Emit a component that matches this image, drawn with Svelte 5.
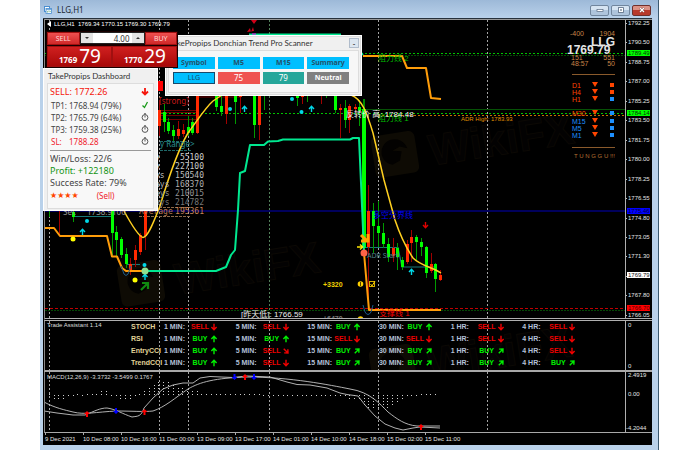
<script>
  const prices = ['1792.25', '1790.50', '1788.75', '1787.00', '1785.25', '1783.50', '1781.75', '1780.00',
    '1778.25', '1776.55', '1774.80', '1773.05', '1771.30', '1769.55', '1767.80', '1766.05'];
  const tags = [
    { v: '1789.49', y: 53, bg: '#00ff00', fg: '#063006' },
    { v: '1784.14', y: 113, bg: '#00ff00', fg: '#063006' },
    { v: '1775.46', y: 211, bg: '#0000ff', fg: '#000040' },
    { v: '1769.79', y: 275, bg: '#ffffff', fg: '#111111' },
    { v: '1766.70', y: 308, bg: '#ff0000', fg: '#500000' }
  ];
  const times = ['9 Dec 2021', '10 Dec 08:00', '10 Dec 16:00', '11 Dec 00:00', '13 Dec 09:00', '13 Dec 17:00',
    '14 Dec 01:00', '14 Dec 10:00', '14 Dec 18:00', '15 Dec 02:00', '15 Dec 11:00'];
  const days = [49.5, 159.5, 188.5, 269.5, 378.5, 487.5];

  // x, high, open/close top, open/close bottom, low, g = bull / r = bear
  const candles = [
    [49.5, 205, 205, 207, 217, 'g'], [59.5, 205, 205, 206, 235, 'r'], [73, 205, 212, 217, 222, 'g'],
    [112, 205, 208, 233, 255, 'g'], [116.5, 226, 232, 240, 256, 'g'], [121, 237, 239, 255, 258, 'g'],
    [126, 248, 254, 264, 268, 'g'], [130.5, 258, 264, 270, 275, 'r'], [135.5, 245, 250, 260, 267, 'r'],
    [140.5, 233, 235, 252, 255, 'r'], [145.5, 205, 208, 236, 250, 'r'],
    [159.5, 100, 110, 126, 136, 'r'], [164, 104, 112, 122, 132, 'g'], [168.5, 118, 122, 131, 134, 'g'],
    [173.5, 125, 130, 136, 141, 'g'], [178.5, 121, 129, 136, 139, 'r'], [183.5, 124, 130, 134, 137, 'r'],
    [188.5, 116, 127, 133, 136, 'g'], [192.5, 118, 122, 133, 135, 'g'], [197.5, 80, 80, 133, 134, 'r'],
    [184, 40, 48, 58, 60, 'r'],
    [216.5, 90, 94, 107, 111, 'g'], [221, 90, 106, 112, 116, 'g'], [226, 90, 92, 114, 124, 'r'],
    [235.5, 90, 92, 102, 124, 'g'], [240, 90, 92, 97, 113, 'r'], [254.5, 40, 60, 125, 138, 'g'],
    [259.5, 60, 80, 125, 140, 'r'], [264, 80, 90, 92, 110, 'g'], [297.5, 90, 93, 98, 106, 'g'],
    [302, 90, 93, 97, 104, 'r'], [307, 90, 90, 91, 102, 'g'], [321.5, 90, 90, 91, 104, 'r'],
    [326.5, 90, 90, 91, 98, 'g'], [335.5, 90, 92, 110, 113, 'g'], [340.5, 104, 108, 110, 138, 'r'],
    [345, 100, 108, 120, 128, 'g'], [349.5, 104, 106, 120, 133, 'r'], [355, 104, 107, 109, 112, 'r'],
    [359.5, 100, 107, 111, 126, 'g'],
    [368.5, 185, 211, 247, 308, 'r'], [373.5, 203, 211, 226, 253, 'g'], [378.5, 201, 226, 233, 247, 'g'],
    [383, 223, 233, 244, 248, 'g'], [388, 238, 244, 257, 262, 'g'], [393, 238, 248, 256, 262, 'r'],
    [397.5, 243, 248, 257, 270, 'g'], [402, 257, 260, 267, 270, 'g'], [407, 240, 244, 262, 264, 'r'],
    [411.5, 230, 237, 243, 262, 'r'], [416, 235, 237, 242, 260, 'g'], [421, 238, 242, 247, 256, 'g'],
    [426, 246, 247, 273, 278, 'g'], [431, 253, 264, 271, 273, 'r'], [435.5, 263, 264, 279, 292, 'g'],
    [440.5, 270, 275, 280, 281, 'r']
  ].map(([x, ...rest]) => [Math.floor(x) + 0.5, ...rest]);
  const ranges = [['y', '55100', '#d0d0d0'], ['y', '227100', '#c8c8c8'], ['ys', '156540', '#bcbcbc'],
    ['ays', '168370', '#acacac'], ['ays', '210015', '#949494'], ['ays', '214782', '#787878']];
  const frames = [['D1', 85, 0, 0], ['H4', 92, 0, 0], ['H1', 99, 0, 1], ['M30', 113, 0, 1],
    ['M15', 121, 1, 1], ['M5', 128, 1, 1], ['M1', 135, 1, 1]];

  const spans = ['1 MIN:', '5 MIN:', '15 MIN:', '30 MIN:', '1 HR:', '4 HR:'];
  // d = sell down, x = sell diagonal, u = buy up, n = buy diagonal
  const signals = [['STOCH', 'dduudd'], ['RSI', 'uudddd'], ['EntryCCI', 'uxnnnd'], ['TrendCCI', 'udnnnn']];
  const turn = { d: 180, x: 135, u: 0, n: 45 };

  const hist = [0, 2, -4, -4, -4, -3, -2, 0, -1, 2, 2, 3, 4, 4, -1, -3, -4, -5, -4, -2, 0, 5, 9, 12, 15, 15, 13, 11, 9, 7, 6, 5,
    4, 3, 3, 2, 1, 1, 1, 1, 1, 1, 1, 1, 1, 1, -1, -1, -1, -1, -2, -2, -2, -2, -2, -3, -3, -2, -2, -2, -2, -2, -3,
    -3, -4, -4, -5, -12, -14, -15, -13, -15, -14, -12, -9, -6, -3, -1, -1, 1, 1, 1, 1];
  const crosses = [[87, 414, 0], [116, 411, 1], [144.5, 412, 0], [234.5, 377, 1], [245, 377, 0], [254, 377, 1], [421, 427, 0]];
  const targets = [['TP1:', '1768.94 (79%)', 1], ['TP2:', '1765.79 (64%)', 0], ['TP3:', '1759.38 (25%)', 0], ['SL:', '1788.28', 0]];
  let lots = $state('4.00');
  const step = (d) => (lots = Math.max(0, Number(lots) + d).toFixed(2));
</script>

{#snippet brand(x, y)}
  <g transform="translate({x} {y}) rotate(-9)" class="brand">
    <rect x="0" y="0" width="44" height="42" rx="6" fill="#0e0b04" />
    <path d="M9 21a13 13 0 0 1 26-4l-7-3-8 3 9 2-3 9-8 3a13 13 0 0 1-9-10z" fill="#030201" />
    <text x="56" y="38" font-size="44">WikiFX</text>
  </g>
{/snippet}

{#snippet up(x, y, color, angle = 0)}
  <path transform="translate({x} {y}) rotate({angle})" d="M0 3V-2.5M-2.5 0L0-2.7L2.5 0" stroke={color} stroke-width="1.4" fill="none" />
{/snippet}

<div class="page">
  <main class="window">
    <header class="titlebar">
      <svg class="doc" viewBox="0 0 8 8"><rect x=".5" y=".5" width="5" height="5" fill="#fff" stroke="#4b8fd0" /><rect x="2" y="2.5" width="5.5" height="5" fill="#eef7ff" stroke="#4b8fd0" stroke-width=".8" /><path d="M2 3.2h5.5" stroke="#4b8fd0" /><path d="M3.5 5v1.5M5 4.5v1.5M6.3 5v1" stroke="#58a55a" stroke-width=".6" /></svg>
      <h1>LLG,H1</h1>
      <button aria-label="Minimise"><svg viewBox="0 0 8 6"><rect x="1" y="2.5" width="6" height="2" fill="#fff" stroke="#566880" stroke-width=".7" /></svg></button>
      <button aria-label="Restore"><svg viewBox="0 0 8 6"><rect x="1.5" y=".6" width="5" height="4.8" fill="#fff" stroke="#566880" stroke-width=".8" /><rect x="3.2" y="2.3" width="1.6" height="1.4" fill="#566880" /></svg></button>
      <button class="close" aria-label="Close"><svg viewBox="0 0 8 6"><path d="M2 1l4 4M6 1L2 5" stroke="#6b2a25" stroke-width="2.2" /><path d="M2 1l4 4M6 1L2 5" stroke="#fff" stroke-width="1.4" /></svg></button>
    </header>

    <div class="body">
      <section class="pane main">
        <div class="chart">
          <svg viewBox="45 20 580 298" class="plot">
            {@render brand(116, 266)}
            {@render brand(370, 137)}
            <g fill="none">
              {#each days as x}<path d="M{x} 20V318" class="day" class:dim={x === 269.5} />{/each}
              <path d="M45 53.5H625M45 113.5H625" stroke="#00c400" stroke-dasharray="2 2" />
              <path d="M45 55.5H625M45 310.5H625" stroke="#044804" stroke-dasharray="2 1" />
              <path d="M360 109.5H625" stroke="#065206" />
              <path d="M378 115.5H625" stroke="#c07000" stroke-dasharray="2 2" />
              <path d="M45 308.5H625" stroke="#c00000" stroke-dasharray="3 2" />
              <path d="M45 211H625" stroke="#00005c" stroke-width="2" />
              <path d="M159 110.5H197M159 112.5H197M159 115.5H197M159 119.5H197M197 97H240" stroke="#700000" />
              <path d="M160 141.5H188M160 150.5H191" stroke="#1f6868" stroke-dasharray="3 1" />
              <path d="M139 207.5H191M139 216.5H191" stroke="#8a6848" stroke-dasharray="3 1" />
              <path d="M72 216.5H112M126 264.5H140M366 247.5H398L402 267H436" stroke="#187878" stroke-width="1.2" />
            </g>
            {#each candles as [x, h, a, b, l, c]}
              <path d="M{x} {h}V{l}" stroke={c === 'g' ? '#009a00' : '#a00000'} />
              <rect x={x - 1.5} y={a} width="3" height={b - a} fill={c === 'g' ? '#00ff00' : '#ff2a00'} />
            {/each}
            <path d="M364 99V109" stroke="#008800" stroke-width="2" />
            <rect x="362" y="109" width="4" height="139" fill="#00ff00" />
            <rect x="158" y="81" width="5" height="10" fill="#ff0000" />

            <g fill="none" stroke-linejoin="round">
              <path class="thick" stroke="#ff9d0a" d="M45 228H54L60 236H107L112 256.500H117L122 268L126 271H145" />
              <path class="thick" stroke="#00e890" d="M145 271H216L226 267L231 255L235 250L238 210L240 173L245 171L250 145H264L268 141.500L278 141L283 139.500H350L353 138H359L361 183L364 252" />
              <path class="thick" stroke="#00e890" d="M249 34.500H341M359 50L363 55" />
              <path class="thick" stroke="#ff9d0a" d="M363 56H402L407 68H426L431 98L441 99M364 253L369 310H441" />
              <path stroke="#ffd020" stroke-width="1.500" d="M124 211C130 222 138 236 143 237.500C149 237 156 215 160 206C166 186 176 153 188 133C197 121 205 108 213 101L222 95M351 95C362 99 367 113 373 133L384 180L395 220C400 235 405 246 413 258C421 266 432 267 441 273" />
            </g>

            <g class="s6">
              <text x="54" y="26" fill="#fff">LLG,H1&nbsp; 1769.34 1770.15 1769.30 1769.79</text>
              <text x="47" y="71" fill="#aaeebb">ADR 1609 &nbsp;Today 892</text>
              <text x="461" y="121" fill="#e09000">ADR High: 1783.93</text>
              <text x="574" y="158" fill="#b87234">T U N G G U !!!</text>
            </g>
            <path d="M47 24l4-3v6z" fill="#fff" />
            <g class="s8">
              <text x="159" y="104" fill="#c81818">[strong]</text>
              <text x="160" y="147" fill="#2a9090">y Range&gt;</text>
              <text x="63" y="215" fill="#999">Sel:</text>
              <text x="87" y="215" fill="#999">1738.9100</text>
              <text x="367" y="258" fill="#4f8088" font-size="7">ADR Start</text>
            </g>
            <g class="mono">
              {#each ranges as [name, value, color], i}
                <text x="155" y={160 + i * 9} fill={color}>{name}</text>
                <text x="204" y={160 + i * 9} text-anchor="end" fill={color}>{value}</text>
              {/each}
              <text x="139" y="214" fill="#b87a54">Average</text>
              <text x="204" y="214" text-anchor="end" fill="#c88458">195361</text>
            </g>
            <g class="cjk">
              <text x="378" y="61" fill="#00b800">阻力线 2</text>
              <text x="378" y="121" fill="#00b800">阻力线 1</text>
              <text x="346" y="117" fill="#eee">反转价 高: 1784.48</text>
              <text x="373" y="218" fill="#0000f0">多空分界线</text>
              <text x="379" y="316" fill="#f00000">支撑线 1</text>
              <text x="241" y="317" fill="#eee">[昨天低]: 1766.59</text>
            </g>
            <g class="bold">
              <text x="323" y="287" fill="#f0d000">+3320</text>
              <text x="323" y="321" fill="#777">+6470</text>
            </g>

            <g fill="#00d8e8">
              <circle cx="87" cy="221" r="2" /><circle cx="144.500" cy="265" r="2" /><circle cx="230" cy="109" r="2" />
              <circle cx="301.500" cy="112" r="2" /><circle cx="292" cy="99" r="2" />
            </g>
            {@render up(82.5, 232, '#00d8e8')}
            {@render up(145, 277, '#00d8e8')}
            {@render up(244.5, 109, '#00d8e8')}
            {@render up(311.5, 109, '#00d8e8')}
            {@render up(411.5, 272, '#00d8e8')}
            {@render up(425.5, 225, '#e00000', 180)}
            {@render up(360, 247, '#ffe600', 90)}
            <path d="M141 290l7-7M142 283h6v6" stroke="#108a10" stroke-width="2.200" fill="none" />
            <path d="M361 235l6 6M361 241h7v-7" stroke="#ffa400" stroke-width="3" fill="none" />
            <circle cx="73" cy="239" r="2.500" fill="#ffff00" /><circle cx="135" cy="280" r="2.500" fill="#ffff00" />
            <circle cx="145" cy="271" r="3.500" fill="#90e090" /><circle cx="364" cy="253" r="3.500" fill="#ff6347" />
            <path d="M121 266l3 8q2 3 4 0l3-8M363 305l2 7q3 5 6 0l2-7" stroke="#1d5c8c" fill="none" />
            <circle cx="360.500" cy="284" r="2.800" fill="#ffd000" /><path d="M360.500 282v4" stroke="#503c00" />
            <circle cx="360.500" cy="319" r="2.800" fill="#ffd000" />
            <rect x="369.500" y="281.500" width="5" height="5" fill="none" stroke="#d8b000" /><path d="M370.500 284l1.500 2 3-5" stroke="#ffd000" fill="none" />
            <path d="M251 20h6l-3 4zM247 32l3-4 1 4 2-5 1 4" fill="#d00018" /><path d="M252 34h4" stroke="#f0f" />

            <g class="hud">
              <text x="570" y="36">-400</text><text x="615" y="36" text-anchor="end">1904</text>
              <text x="571" y="60">151</text><text x="615" y="60" text-anchor="end">551</text>
              <text x="571" y="66">48:57</text><text x="615" y="66" text-anchor="end">50</text>
              <path d="M572 74.500H615M572 147.500H615" stroke="#8a5a2c" />
              <g class="big"><text x="615" y="46" text-anchor="end">LLG</text><text x="567" y="54">1769.79</text></g>
              {#each frames as [name, y, blue, box]}
                <text x="572" y={y + 3} fill={blue ? '#1e90ff' : '#ff4500'}>{name}</text>
                <path d="M592 {y - 3}h6l-3 5z" fill="#ff4500" />
                <rect x="610" y={y - 2} width="4" height="4" fill={box ? '#1e90ff' : '#ff4500'} />
              {/each}
            </g>
          </svg>

          <section class="scanner">
            <header><h2>TakePropips Donchian Trend Pro Scanner</h2><button aria-label="Collapse">-</button></header>
            <table>
              <thead><tr><th>Symbol</th><th>M5</th><th>M15</th><th>Summary</th></tr></thead>
              <tbody><tr><td><button>LLG</button></td><td class="bad">75</td><td class="good">79</td><td class="flat">Neutral</td></tr></tbody>
            </table>
          </section>

          <section class="dash">
            <h2>TakePropips Dashboard</h2>
            <div class="card">
              <div class="row call"><span>SELL: 1772.26</span><svg viewBox="0 0 8 8"><path d="M4 0v6M1 3.500l3 3 3-3" stroke="#f5160c" stroke-width="1.800" fill="none" /></svg></div>
              {#each targets as [name, value, hit]}
                <div class="row" class:stop={name === 'SL:'}>
                  <span><b>{name}</b>{value}</span>
                  <svg viewBox="0 0 8 8">
                    {#if hit}<path d="M1.500 4.500l2 2L6.500 1" stroke="#1a9a1a" stroke-width="1.300" fill="none" />
                    {:else}<circle cx="4" cy="4.500" r="2.900" fill="none" stroke="#444" stroke-width=".9" /><path d="M4 2.500v2M3 .8h2" stroke="#444" stroke-width=".9" />{/if}
                  </svg>
                </div>
              {/each}
              <hr />
              <p>Win/Loss: 22/6</p>
              <p class="profit">Profit: +122180</p>
              <p>Success Rate: 79%</p>
              <p class="stars"><span>★★★★</span><span>(Sell)</span></p>
            </div>
          </section>

          <form class="ticket" onsubmit={(e) => e.preventDefault()}>
            <button type="button" class="tab">SELL</button>
            <div class="lots">
              <button type="button" aria-label="Less" onclick={() => step(-1)}><i class="tri"></i></button>
              <input aria-label="Lots" bind:value={lots} />
              <button type="button" aria-label="More" onclick={() => step(1)}><i class="tri rise"></i></button>
            </div>
            <button type="button" class="tab">BUY</button>
            <button type="button" class="price"><small>1769</small>79</button>
            <button type="button" class="price"><small>1770</small>29</button>
          </form>
        </div>
        <div class="axis">
          {#each prices as p}<span>{p}</span>{/each}
          {#each tags as t}<em style="top:{((t.y - 20) / 298) * 100}%;background:{t.bg};color:{t.fg}">{t.v}</em>{/each}
        </div>
      </section>

      <section class="pane assist">
        <div class="chart">
          <svg class="lines" viewBox="45 321 580 49" preserveAspectRatio="none">
            {@render brand(368, 350)}
            {#each days as x}<path d="M{x} 321V370" class="day" />{/each}
          </svg>
          <h2>Trade Assistant 1.14</h2>
          <table>
            <tbody>
              {#each signals as [name, row]}
                <tr>
                  <th>{name}</th>
                  {#each spans as span, i}
                    {@const s = row[i]}
                    <td><div class="sig" class:sell={s === 'd' || s === 'x'}>
                      <span>{span}</span><strong>{s === 'd' || s === 'x' ? 'SELL' : 'BUY'}</strong>
                      <svg viewBox="-4 -4 8 8"><path transform="rotate({turn[s]})" d="M0 3.200V-2.500M-2.600 0L0-2.800L2.600 0" stroke="currentColor" stroke-width="1.400" fill="none" /></svg>
                    </div></td>
                  {/each}
                </tr>
              {/each}
            </tbody>
          </table>
        </div>
        <div class="axis"><span>0</span><span>0</span></div>
      </section>

      <section class="pane macd">
        <div class="chart">
          <svg viewBox="45 372 580 60" class="plot">
            {#each days as x}<path d="M{x} 372V432" class="day" />{/each}
            {#each hist as h, i}
              <path d="M{Math.round(44 + i * 4.77) + 0.5} 395V{395 - (h || 1)}" stroke="#d0d0d0" stroke-dasharray="1 2" />
            {/each}
            <g fill="none" stroke="#c4c4c4" stroke-width=".9">
              <path d="M44 402C55 408 65 410 73 412C85 415 95 412 117 411C130 411 145 412 153 411C165 407 175 398 188 389C200 382 215 378 247 377C290 377 330 385 350 389C370 392 380 404 388 412C397 419 405 425 417 426H440" />
              <path d="M44 411L57 413L73 415L85 415C95 411 100 408 107 408C115 409 123 414 132 417C138 416 141 417 144 408L153 398L163 389L173 385L183 383H193L200 378L210 376.500L233 377.500L247 376L270 377L287 382L297 384.500L310 385L327 388L340 393L347 394.500L358 396L365 405L375 416L385 424L395 428L403 430L413 428L420 427L440 428" />
            </g>
            {#each crosses as [x, y, blue]}
              <path transform="translate({x} {y}) rotate({blue ? 180 : 0})" d="M0-3L3 0H1V3H-1V0H-3z" fill={blue ? '#0000ff' : '#ff0000'} />
            {/each}
            <text class="s6" x="47" y="379" fill="#ddd">MACD(12,26,9) -3.3732 -3.5499 0.1767</text>
          </svg>
        </div>
        <div class="axis scale"><span>2.4919</span><span>0.00</span><span>-4.2044</span></div>
      </section>

      <ol class="times">{#each times as t}<li>{t}</li>{/each}</ol>
    </div>
  </main>
</div>

<style>
  :global(body) { margin: 0; background: #fff; }
  .page { padding: 0 41px 0 40px; font-family: "Liberation Sans", Arial, sans-serif; }
  h1, h2, p, ol { margin: 0; padding: 0; font-weight: normal; }
  button, input { font: inherit; padding: 0; margin: 0; box-sizing: border-box; }
  .window { background: #b9d1ea; padding: 0 6px 5px 3px; border-right: 1px solid #3c5a70; }
  .titlebar { height: 18px; display: flex; align-items: center; gap: 2px; margin: 0 -6px 0 -3px; padding: 2px 7px 0 4px; box-sizing: border-box; background: linear-gradient(#9db9d8, #b9d1ea); }
  .doc { width: 8px; height: 8px; }
  h1 { flex: 1; padding-left: 3px; font: 8px/12px "Noto Sans", sans-serif; color: #1c2733; }
  .titlebar button { width: 19px; height: 11px; display: grid; place-items: center; border: 1px solid #71869e; border-radius: 2px; background: linear-gradient(#d6e4f2 50%, #aec4dc 50%); }
  .titlebar button svg { width: 8px; height: 6px; }
  .titlebar .close { background: linear-gradient(#dc9286 50%, #b8392b 50%); border-color: #70302c; }

  .body { background: #000; border-top: 1px solid #28323c; padding-left: 1px; }
  .pane { display: flex; border-left: 1px solid #888; }
  .main { border-top: 1px solid #999; border-bottom: 3px double #b0b0b0; }
  .assist { border-bottom: 2px solid #a8a8a8; }
  .macd { border-bottom: 1px solid #a8a8a8; }
  .chart { flex: 1; min-width: 0; position: relative; }
  .plot { display: block; width: 100%; }
  .axis { position: relative; width: 26px; border-left: 1px solid #b0b0b0; display: flex; flex-direction: column; justify-content: space-between; color: #e4e4e4; font-size: 6px; line-height: 6px; }
  .axis span { padding-left: 2px; }
  .main .axis span::before { content: ""; position: absolute; left: 0; width: 1px; height: 1px; margin-top: 3px; background: #bbb; }
  .axis em { position: absolute; left: 1px; width: 22px; padding-left: 1px; height: 6px; margin-top: -3px; font-style: normal; }
  .day { stroke: #a4a4a4; stroke-dasharray: 2 2; }
  .dim { stroke: #52805a; }
  .thick { stroke-width: 2; }
  .s6 { font-size: 6px; }
  .s8 { font: 8px "Noto Sans", sans-serif; }
  .mono { font: 8px "DejaVu Sans Mono", monospace; }
  .cjk { font: 8px "Liberation Sans", "Noto Sans CJK SC", sans-serif; }
  .bold { font-size: 7px; font-weight: bold; }
  .hud { font-size: 7px; fill: #c88448; }
  .big { font-size: 12px; font-weight: bold; fill: #e4e4e4; }
  .brand text { font-weight: bold; fill: #030202; stroke: #0b0804; }

  .scanner, .dash { position: absolute; background: #f0f0f0; border: 1px solid #fff; box-sizing: border-box; font-family: "Noto Sans", sans-serif; color: #444; }
  .scanner { left: 120px; top: 15px; width: 197px; height: 61px; padding: 0 2px; box-shadow: inset 0 0 0 1px #ddd; }
  .scanner header { height: 14px; display: flex; justify-content: space-between; align-items: center; }
  .scanner h2, .dash h2 { font: 8px/13px Lato, sans-serif; color: #333; white-space: nowrap; }
  .scanner h2 { padding-left: 1px; }
  .scanner header button { width: 10px; height: 10px; line-height: 7px; font-size: 8px; background: #dce6f0; border: 1px solid #b0bccb; color: #333; }
  .scanner table { width: 100%; height: 43px; table-layout: fixed; border-spacing: 3px; border: 1px solid #ddd; background: #f7f7f7; padding: 3px 6px 5px 1px; box-sizing: border-box; }
  .scanner th, .scanner td { padding: 0; height: 12px; font-size: 7px; line-height: 12px; text-align: center; font-weight: bold; }
  .scanner th { background: #00bfff; color: #24516a; }
  .scanner td { color: #fff; font-weight: normal; font-size: 8px; }
  .scanner td button { display: block; width: 100%; height: 12px; line-height: 10px; font-size: 7px; border: 1px solid #174a6a; background: #00bfff; color: #174a6a; }
  .scanner .bad { background: #ef5350; }
  .scanner .good { background: #26a69a; }
  .scanner .flat { background: #808080; font-size: 7px; font-weight: bold; }

  .dash { left: -2px; top: 48px; width: 115px; height: 143px; padding: 0 3px; }
  .dash h2 { padding-left: 1px; line-height: 14px; }
  .card { height: 124px; border: 1px solid #ddd; background: #f8f8f8; padding: 0 2px; }
  .row { display: flex; align-items: center; justify-content: space-between; height: 12px; padding: 0 2px 0 1px; font-size: 8px; }
  .row svg { width: 8px; height: 8px; }
  .row b { display: inline-block; width: 18px; font-weight: normal; }
  .call { height: 15px; font-size: 9px; color: #f5160c; padding-left: 0; }
  .stop { color: #f01c2c; }
  hr { height: 1px; border: 0; background: #999; margin: 3px 0 2px; }
  .card p { font-size: 9px; line-height: 12px; }
  .card .profit { color: #149414; }
  .card .stars { display: flex; gap: 18px; line-height: 14px; color: #f01c2c; font-size: 8px; }
  .stars span:first-child { color: #ff4500; font-family: "DejaVu Sans", sans-serif; }

  .ticket { position: absolute; left: 1px; top: 11px; width: 132px; display: grid; grid-template-columns: repeat(8, 1fr); row-gap: 1px; background: #1a0000; padding: 1px; box-sizing: border-box; font-family: "Noto Sans", sans-serif; }
  .tab, .price { border: 1px solid #a01010; color: #ffd8d8; }
  .tab { grid-column: span 2; height: 13px; font-size: 7px; line-height: 10px; background: linear-gradient(#ee5050, #d02828); }
  .lots { grid-column: span 4; display: flex; border: 1px solid #222; margin-bottom: 1px; }
  .lots button { width: 12px; border: 0; background: #e4e4e4; display: grid; place-items: center; }
  .lots input { flex: 1; min-width: 0; height: 10px; border: 0; text-align: right; font-size: 8px; padding-right: 2px; background: #fff; color: #333; }
  .tri { border: 2px solid transparent; border-top-color: #333; border-bottom: 0; }
  .rise { border: 2px solid transparent; border-bottom-color: #333; border-top: 0; }
  .price { grid-column: span 4; height: 21px; line-height: 18px; background: linear-gradient(#d02020, #a80808); color: #fff; font-size: 19px; text-align: right; padding-right: 10px; white-space: nowrap; }
  .price small { font-size: 8px; font-weight: bold; margin-right: 2px; }

  .assist .chart { display: flex; height: 49px; padding-right: 31px; box-sizing: border-box; overflow: hidden; }
  .lines { position: absolute; inset: 0; width: 100%; height: 100%; }
  .assist h2 { width: 84px; padding-left: 2px; font-size: 6px; line-height: 8px; color: #ddd; }
  .assist table { flex: 1; min-width: 0; table-layout: fixed; border-collapse: collapse; font-size: 7px; line-height: 12px; position: relative; height: 48px; }
  .assist th { width: 33px; padding: 0; text-align: left; color: #e0d498; }
  .assist td { padding: 0; }
  .sig { display: grid; grid-template-columns: 26px 18px 8px; align-items: center; column-gap: 1px; height: 12px; color: #00f000; white-space: nowrap; }
  .sig span { color: #b4c0d8; font-weight: bold; }
  .sig strong { text-align: center; font-size: 7px; }
  .sig svg { width: 8px; height: 8px; }
  .sell { color: #f00000; }
  .assist .axis { padding: 1px 0; }
  .macd .scale { justify-content: flex-start; gap: 13px; }
  .scale span:last-child { margin-top: 15px; padding-left: 0; }

  .times { display: grid; grid-template-columns: repeat(16, 1fr); list-style: none; height: 12px; color: #e4e4e4; font-size: 6px; line-height: 12px; }
  .times li { position: relative; padding-left: 1px; white-space: nowrap; }
  .times li::before { content: ""; position: absolute; left: 1px; top: 0; width: 1px; height: 2px; background: #aaa; }
</style>
